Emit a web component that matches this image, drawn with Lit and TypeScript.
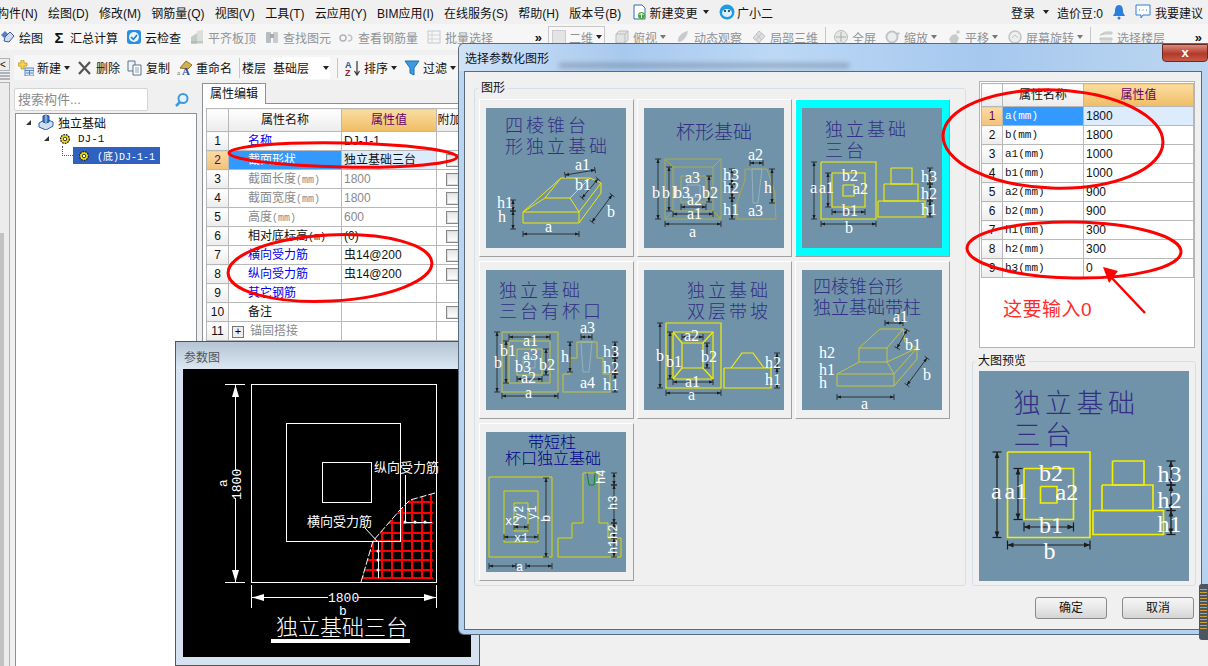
import { LitElement, html, svg, css } from 'lit';
import { customElement } from 'lit/decorators.js';

type Label = [string, number, number, number?];
type Dim = [number, number, number, number];
interface Thumb {
  title: [string, number, number][];
  size?: number;
  spacing?: number;
  titleColor?: string;
  color: string;
  sw: number;
  lines: string[];
  pale?: string[];
  green?: string[];
  dims: Dim[];
  labels: Label[];
  mono?: boolean;
}

const pyramid: Thumb = {
  title: [['四棱锥台', 19, 24], ['形独立基础', 19, 45]],
  spacing: 3,
  color: '#f2e600',
  sw: 1,
  lines: [
    '37,104 93,104 93,115 37,115 37,104 75,70 104,70 84,90 59,90 75,70',
    '59,90 37,104', '84,90 93,104', '104,70 115,75 93,104', '115,75 115,85 93,115',
  ],
  dims: [[37, 126, 93, 126], [106, 114, 126, 87], [79, 67, 109, 62], [96, 90, 112, 71], [27, 92, 27, 103], [27, 103, 27, 121]],
  labels: [['a1', 89, 62], ['b1', 89, 82], ['h1', 11, 100], ['h', 12, 114], ['a', 59, 124], ['b', 121, 109]],
};

const cup: Thumb = {
  title: [['杯形基础', 32, 31]],
  size: 19,
  color: '#a9ab4e',
  sw: 1,
  lines: [
    '21,51 77,51 77,111 21,111 21,51', '29,59 69,59 69,103 29,103 29,59', '37,68 62,68 62,94 37,94 37,68',
    '21,51 29,59', '77,51 69,59', '21,111 29,103', '77,111 69,103',
    '101,61 123,61 131,85 131,95 132,111 93,111 93,94 101,72 101,61',
  ],
  pale: ['43,77 56,77 56,89 43,89 43,77', '108,61 118,61 114,95 109,95 108,61'],
  dims: [[14, 51, 14, 111], [25, 59, 25, 103], [21, 116, 77, 116], [29, 106, 69, 106], [37, 99, 62, 99], [65, 68, 65, 94], [106, 55, 119, 55], [128, 61, 128, 95], [88, 61, 88, 76], [88, 76, 88, 90], [88, 90, 88, 111]],
  labels: [['b', 8, 90], ['b', 18, 90], ['l', 28, 90], ['b3', 30, 90], ['b2', 58, 90], ['a3', 41, 75], ['a2', 43, 97], ['a1', 43, 111], ['a', 45, 129], ['h3', 79, 72], ['h2', 79, 85], ['h1', 79, 107], ['h', 120, 85], ['a3', 104, 108], ['a2', 104, 52]],
};

const threeStep: Thumb = {
  title: [['独立基础', 23, 28], ['三台', 23, 49]],
  spacing: 3,
  color: '#f4ee00',
  sw: 1.1,
  lines: ['19,54 74,54 74,111 19,111 19,54', '30,65 63,65 63,99 30,99 30,65', '41,77 52,77 52,88 41,88 41,77', '76,93 123,93 123,109 76,109 76,93', '82,76 116,76 116,93 82,93 82,76', '89,60 110,60 110,76 89,76 89,60'],
  dims: [[12, 54, 12, 111], [26, 65, 26, 99], [19, 116, 74, 116], [30, 104, 63, 104], [128, 60, 128, 76], [128, 76, 128, 93], [128, 93, 128, 109]],
  labels: [['a', 8, 85], ['a1', 17, 85], ['b2', 40, 73], ['a2', 51, 86], ['b1', 40, 108], ['b', 43, 125], ['h3', 119, 74], ['h2', 119, 91], ['h1', 119, 107]],
};

const threeCup: Thumb = {
  title: [['独立基础', 13, 27], ['三台有杯口', 13, 48]],
  spacing: 3,
  color: '#c4c43e',
  sw: 1,
  lines: ['16,62 72,62 72,122 16,122 16,62', '23,71 64,71 64,113 23,113 23,71', '31,79 56,79 56,105 31,105 31,79', '91,72 111,72 111,88 117,88 117,104 124,104 124,122 77,122 77,104 84,104 84,88 91,88 91,72'],
  pale: ['37,87 49,87 49,98 37,98 37,87', '95,72 106,72 103,102 97,102 95,72'],
  dims: [[11, 62, 11, 122], [20, 71, 20, 113], [16, 126, 72, 126], [23, 67, 64, 67], [31, 109, 56, 109], [60, 79, 60, 105], [95, 67, 106, 67], [84, 72, 84, 102], [129, 72, 129, 88], [129, 88, 129, 104], [129, 104, 129, 122]],
  labels: [['b', 8, 98], ['b1', 14, 86], ['a1', 37, 76], ['a3', 37, 90], ['b3', 29, 102], ['b2', 53, 100], ['a2', 35, 113], ['a', 39, 128], ['a3', 94, 63], ['h', 75, 92], ['a4', 94, 118], ['h3', 117, 87], ['h2', 117, 103], ['h1', 117, 120]],
};

const doubleSlope: Thumb = {
  title: [['独立基础', 43, 27], ['双层带坡', 43, 48]],
  spacing: 3,
  color: '#f4ee00',
  sw: 1.2,
  lines: ['22,53 77,53 77,118 22,118 22,53', '29,62 69,62 69,109 29,109 29,62', '38,73 59,73 59,98 38,98 38,73', '29,62 38,73', '69,62 59,73', '29,109 38,98', '69,109 59,98', '80,98 127,98 127,118 80,118 80,98', '87,98 98,83 109,83 120,98'],
  dims: [[16, 53, 16, 118], [26, 62, 26, 109], [22, 123, 77, 123], [29, 112, 69, 112], [38, 67, 59, 67], [63, 73, 63, 98], [133, 83, 133, 98], [133, 98, 133, 118]],
  labels: [['b', 12, 91], ['b1', 22, 97], ['a2', 40, 71], ['b2', 57, 92], ['a1', 41, 117], ['a', 44, 130], ['h2', 121, 98], ['h1', 121, 115]],
};

const pedestal: Thumb = {
  title: [['四棱锥台形', 11, 23], ['独立基础带柱', 11, 44]],
  color: '#c4c43e',
  sw: 1,
  lines: ['35,104 92,104 92,116 35,116 35,104', '57,78 85,78 85,92 57,92 57,78', '57,78 78,59 101,59 85,78', '101,59 103,72', '92,104 115,78 115,89 92,116', '35,104 57,92', '85,92 92,104', '85,92 115,78', '103,72 115,78'],
  dims: [[35, 127, 92, 127], [105, 115, 125, 88], [83, 53, 101, 53], [105, 60, 95, 78]],
  labels: [['a1', 91, 52], ['b1', 103, 80], ['h2', 17, 88], ['h1', 17, 105], ['h', 17, 118], ['b', 121, 110], ['a', 59, 139]],
};

const shortColumn: Thumb = {
  title: [['带短柱', 42, 16], ['杯口独立基础', 19, 32]],
  size: 16,
  titleColor: '#00008b',
  color: '#d8d800',
  sw: 1,
  mono: true,
  lines: ['3,45 66,45 66,125 3,125 3,45', '18,59 52,59 52,110 18,110 18,59', '28,71 42,71 42,99 28,99 28,71', '97,41 113,41 113,91 122,91 122,106 135,106 135,125 72,125 72,106 86,106 86,91 97,91 97,41'],
  green: ['101,41 103,53 108,53 109,41'],
  dims: [[60, 46, 60, 125], [18, 105, 52, 105], [28, 95, 42, 95], [3, 134, 30, 134], [40, 134, 66, 134], [128, 41, 128, 53], [128, 53, 128, 91], [128, 91, 128, 106], [128, 106, 128, 125]],
  labels: [['x1', 28, 110], ['x2', 19, 93], ['a', 30, 139], ['y2', 37, 88, -90], ['y1', 50, 88, -90], ['b', 64, 90, -90], ['h4', 119, 52, -90], ['h3', 131, 78, -90], ['h2', 131, 107, -90], ['h1', 131, 122, -90]],
};

const THUMBS: Thumb[] = [pyramid, cup, threeStep, threeCup, doubleSlope, pedestal, shortColumn];

function dimension([x1, y1, x2, y2]: Dim) {
  const len = Math.hypot(x2 - x1, y2 - y1) || 1;
  const ux = (x2 - x1) / len;
  const uy = (y2 - y1) / len;
  const head = (x: number, y: number, d: number) =>
    `${x},${y} ${x + d * 4 * ux - 1.6 * uy},${y + d * 4 * uy + 1.6 * ux} ${x + d * 4 * ux + 1.6 * uy},${y + d * 4 * uy - 1.6 * ux}`;
  const tick = (x: number, y: number) =>
    svg`<line x1=${x - 3 * uy} y1=${y + 3 * ux} x2=${x + 3 * uy} y2=${y - 3 * ux}></line>`;
  return svg`
    <line x1=${x1} y1=${y1} x2=${x2} y2=${y2}></line>
    ${tick(x1, y1)}${tick(x2, y2)}
    <polygon class="head" points=${head(x1, y1, 1)}></polygon>
    <polygon class="head" points=${head(x2, y2, -1)}></polygon>`;
}

function drawing(t: Thumb, px: number) {
  return html`<svg class="drawing" width=${px} height=${px} viewBox="0 0 140 140">
    <rect width="140" height="140" fill="#7093a9"></rect>
    ${t.title.map(([s, x, y]) => svg`<text class="t-title" x=${x} y=${y} font-size=${t.size ?? 18} letter-spacing=${t.spacing ?? 0} fill=${t.titleColor ?? '#332f85'}>${s}</text>`)}
    <g fill="none" stroke=${t.color} stroke-width=${t.sw}>
      ${t.lines.map((p) => svg`<polyline points=${p}></polyline>`)}
    </g>
    <g fill="none" stroke="#9fc0c4" stroke-width="0.7">
      ${(t.pale ?? []).map((p) => svg`<polyline points=${p}></polyline>`)}
    </g>
    <g fill="none" stroke="#0a8a1a" stroke-width="1">
      ${(t.green ?? []).map((p) => svg`<polyline points=${p}></polyline>`)}
    </g>
    <g stroke="#1c1c1c" stroke-width="0.8">${t.dims.map(dimension)}</g>
    ${t.labels.map(([s, x, y, r]) => svg`<text class=${t.mono ? 'lab mono' : 'lab'} x=${x} y=${y} transform=${r ? `rotate(${r} ${x} ${y})` : ''}>${s}</text>`)}
  </svg>`;
}

const ic = (body: unknown, w = 16) => html`<svg class="ic" width=${w} height="16" viewBox="0 0 16 16">${body}</svg>`;

const ICONS: Record<string, () => unknown> = {
  pencil: () => ic(svg`<path d="M1 6l4-4 3 3-4 4z" fill="#5a7fc0"/><path d="M5 8l5-5 4 4-5 6-5-1z" fill="#cfdcf0" stroke="#3a5fa0"/>`),
  cloud: () => ic(svg`<rect x="1" y="1" width="14" height="14" rx="3" fill="#2a8fe0"/><circle cx="8" cy="8" r="5" fill="#e8f4ff"/><path d="M5 8l2.4 2.4L11 6" fill="none" stroke="#1d78c8" stroke-width="1.6"/>`),
  align: () => ic(svg`<path d="M2 15V8l6-4v11z" fill="#c4cac4"/><path d="M8 15V2l6-1v14z" fill="#dadfda"/><path d="M2 13h12" stroke="#a8b0a8"/>`),
  find: () => ic(svg`<rect x="2" y="3" width="5" height="11" rx="1" fill="#b8bcc0"/><rect x="9" y="3" width="5" height="11" rx="1" fill="#c8ccd0"/><rect x="6" y="5" width="4" height="4" fill="#a8acb0"/>`),
  rebar: () => ic(svg`<circle cx="4" cy="9" r="3" fill="none" stroke="#b0b4b8" stroke-width="1.5"/><path d="M9 6c5 0 5 6 0 6" fill="none" stroke="#c0c4c8" stroke-width="1.5"/>`),
  batch: () => ic(svg`<rect x="2" y="2" width="12" height="12" fill="none" stroke="#c4c8cc"/><path d="M2 6h12M2 10h12M6 2v12" stroke="#d0d4d8"/>`),
  box: () => ic(svg`<path d="M2 5l3-3h9v9l-3 3H2z" fill="#e2e4e4" stroke="#bcbcbc"/><path d="M2 5h9v9M11 5l3-3" fill="none" stroke="#bcbcbc"/>`),
  orbit: () => ic(svg`<path d="M3 13c-1-5 4-10 10-11-1 6-5 11-10 11z" fill="#c8cacc"/>`),
  local: () => ic(svg`<path d="M8 2l6 5-6 7-6-5z" fill="#dcdede" stroke="#c0c2c2"/><path d="M5 5l6 6M11 4l-6 7" stroke="#c0c2c2"/>`),
  full: () => ic(svg`<circle cx="8" cy="8" r="6.5" fill="#e6e8e8" stroke="#b8bcbc"/><path d="M8 3v10M3 8h10" stroke="#a8acac"/>`),
  zoom: () => ic(svg`<circle cx="7" cy="8" r="5.5" fill="#eceeee" stroke="#c0c4c4" stroke-width="2"/><path d="M13 3v3M12 4.500h3" stroke="#c0c4c4"/>`),
  pan: () => ic(svg`<path d="M3 10l3-4 4-1 3 4-2 5H5z" fill="#c8cbcc"/><path d="M12 1v4M10 3h4" stroke="#c0c4c4"/>`),
  rotate: () => ic(svg`<circle cx="8" cy="8" r="6" fill="#eee" stroke="#c0c4c4" stroke-width="1.500"/><path d="M5 9l3-3 3 3" fill="none" stroke="#c0c4c4"/>`),
  floors: () => ic(svg`<path d="M2 6l5-3h7v2H7zM2 9h12v2H2zM2 13h12" fill="#d4d6d6" stroke="#c4c6c6"/>`),
  add: () => ic(svg`<path d="M3 0h3v3h3v3H6v3H3V6H0V3h3z" fill="#f3d545" stroke="#b09020" stroke-width="0.700"/><rect x="7" y="8" width="9" height="8" fill="#dce8f6" stroke="#5a86c0"/><path d="M7 10.500h9M11.500 11v4M8 13h7" stroke="#5a86c0"/>`),
  del: () => ic(svg`<path d="M2 2l11 12M13 2L2 14" stroke="#555" stroke-width="2.200"/>`),
  copy: () => ic(svg`<path d="M1 1h7v10H1z" fill="#eef3f8" stroke="#5a7390"/><path d="M6 5h8v10H6z" fill="#fff" stroke="#5a7390"/><path d="M8 8h4M8 10h4M8 12h4" stroke="#8aa0b8"/>`),
  rename: () => ic(svg`<path d="M3 8l6-7 6 4-4 4z" fill="#d4b050" stroke="#907020"/><text x="0" y="15" font-size="7" fill="#6a6a6a" font-family="Liberation Serif">a</text><text x="5" y="15" font-size="11" font-weight="bold" fill="#2a4fa0" font-family="Liberation Serif">A</text>`),
  sort: () => ic(svg`<text x="0" y="8" font-size="9" fill="#2a4fa0" font-family="Liberation Sans" font-weight="bold">A</text><text x="0" y="16" font-size="9" fill="#a02020" font-family="Liberation Sans" font-weight="bold">Z</text><path d="M12 1v13M9.500 11l2.500 4 2.500-4" fill="none" stroke="#333" stroke-width="1.200"/>`),
  funnel: () => ic(svg`<path d="M1 1h14L10 8v7l-4-2V8z" fill="#3c9ade" stroke="#1f6fb0"/>`),
  doc: () => ic(svg`<path d="M2 1h8l3 3v11H2z" fill="#fff" stroke="#2a6fb8"/><circle cx="9.500" cy="11.500" r="3.500" fill="#4aa83a"/><path d="M9.500 9v5M7.500 11l2-2 2 2" fill="none" stroke="#fff"/>`),
  smile: () => ic(svg`<ellipse cx="8" cy="8" rx="7.500" ry="7.500" fill="#1e9be6"/><ellipse cx="8" cy="9" rx="5" ry="4" fill="#d8f0ff"/><circle cx="6" cy="7" r="1" fill="#123"/><circle cx="10" cy="7" r="1" fill="#123"/>`),
  bell: () => ic(svg`<path d="M8 1c3 0 4 3 4 6s2 4 2 5H2c0-1 2-2 2-5s1-6 4-6z" fill="#2a80dc"/><circle cx="8" cy="14" r="1.500" fill="#2a80dc"/>`),
  comment: () => ic(svg`<path d="M1 1h14v10H8l-2 3v-3H1z" fill="#fff" stroke="#2a80dc"/><path d="M4 6h1M7.500 6h1M11 6h1" stroke="#2a80dc"/>`),
  tree: () => ic(svg`<path d="M1 9l7-4 7 3v4l-7 4-7-3z" fill="#cfe0f4" stroke="#2a5fa8"/><path d="M5 8V2l3-1 3 1v6l-3 1z" fill="#3f78c0" stroke="#1f4f90"/><path d="M8 1v8" stroke="#cfe0f4"/>`),
  gear: () => ic(svg`<circle cx="8" cy="8" r="5" fill="#f0e020" stroke="#222" stroke-width="1.500" stroke-dasharray="2 1"/><circle cx="8" cy="8" r="2" fill="#fff" stroke="#222"/>`, 14),
  lens: () => ic(svg`<circle cx="9" cy="6.500" r="4.500" fill="#e4f2fc" stroke="#3c9ade" stroke-width="2"/><path d="M6 10l-4 4" stroke="#3c9ade" stroke-width="2.500"/>`),
};

const icon = (name: string) => ICONS[name]();

interface Tool { icon?: string; label?: string; caret?: boolean; sep?: boolean; off?: boolean }

const MENU = ['构件(N)', '绘图(D)', '修改(M)', '钢筋量(Q)', '视图(V)', '工具(T)', '云应用(Y)', 'BIM应用(I)', '在线服务(S)', '帮助(H)', '版本号(B)'];

const TOOLS_LEFT: Tool[] = [
  { icon: 'pencil', label: '绘图' },
  { label: '汇总计算' },
  { icon: 'cloud', label: '云检查' },
  { icon: 'align', label: '平齐板顶', off: true },
  { icon: 'find', label: '查找图元', off: true },
  { icon: 'rebar', label: '查看钢筋量', off: true },
  { icon: 'batch', label: '批量选择', off: true },
];

const TOOLS_RIGHT: Tool[] = [
  { icon: 'box', label: '俯视', caret: true, off: true },
  { icon: 'orbit', label: '动态观察', off: true },
  { icon: 'local', label: '局部三维', off: true },
  { sep: true },
  { icon: 'full', label: '全屏', off: true },
  { icon: 'zoom', label: '缩放', caret: true, off: true },
  { icon: 'pan', label: '平移', caret: true, off: true },
  { icon: 'rotate', label: '屏幕旋转', caret: true, off: true },
  { sep: true },
  { icon: 'floors', label: '选择楼层', off: true },
];

const TOOLS_PANEL: Tool[] = [
  { icon: 'add', label: '新建', caret: true },
  { icon: 'del', label: '删除' },
  { icon: 'copy', label: '复制' },
  { icon: 'rename', label: '重命名' },
];

interface PropRow { name: string; unit?: string; value?: string; kind: 'link' | 'off' | 'plain'; check: boolean; selected?: boolean; expand?: boolean }

const PROPS: PropRow[] = [
  { name: '名称', value: 'DJ-1-1', kind: 'link', check: false },
  { name: '截面形状', value: '独立基础三台', kind: 'plain', check: true, selected: true },
  { name: '截面长度', unit: '(mm)', value: '1800', kind: 'off', check: true },
  { name: '截面宽度', unit: '(mm)', value: '1800', kind: 'off', check: true },
  { name: '高度', unit: '(mm)', value: '600', kind: 'off', check: true },
  { name: '相对底标高', unit: '(m)', value: '(0)', kind: 'plain', check: true },
  { name: '横向受力筋', value: '虫14@200', kind: 'link', check: true },
  { name: '纵向受力筋', value: '虫14@200', kind: 'link', check: true },
  { name: '其它钢筋', kind: 'link', check: false },
  { name: '备注', kind: 'plain', check: true },
  { name: '锚固搭接', kind: 'off', check: false, expand: true },
];

const PARAMS: [string, string][] = [
  ['a', '1800'], ['b', '1800'], ['a1', '1000'], ['b1', '1000'], ['a2', '900'],
  ['b2', '900'], ['h1', '300'], ['h2', '300'], ['h3', '0'],
];

@customElement('app-root')
export class AppRoot extends LitElement {
  static styles = css`
    :host {
      display: block;
      position: relative;
      width: 1208px;
      height: 666px;
      overflow: hidden;
      background: #f0f0f0;
      color: #111;
      font: 12px 'Liberation Sans', 'Noto Sans CJK SC', sans-serif;
    }
    svg { display: block; flex: none; }

    .menu { display: flex; align-items: center; gap: 10.3px; height: 24px; margin-left: -3px; white-space: nowrap; }
    .menu .extra { display: flex; align-items: center; gap: 2px; }
    .menu .extra .caret { margin-left: 3px; }
    .menu .end { margin-left: auto; display: flex; align-items: center; gap: 8px; padding-right: 5px; }
    .menu .suggest { display: flex; align-items: center; gap: 4px; }
    .caret { width: 0; height: 0; border: 3px solid transparent; border-top: 4px solid #222; border-bottom: 0; flex: none; }
    .off .caret { border-top-color: #777; }

    .bar { display: flex; align-items: center; height: 26px; white-space: nowrap; background: #f6f6f6; }
    .bar .group { display: flex; align-items: center; gap: 8px; width: 548px; flex: none; }
    .bar .group2 { display: flex; align-items: center; gap: 9px; flex: none; }
    .bar .group2 .sep { margin: 0 -2px; }
    .more { margin-left: auto; font-size: 13px; font-weight: bold; padding-right: 6px; }
    .tool { display: inline-flex; align-items: center; gap: 3px; font-size: 12px; }
    .tool.off { color: #8f9396; }
    .sigma { font-size: 15px; font-weight: bold; width: 16px; text-align: center; }
    .sep { width: 1px; height: 20px; background: #c4c8cc; flex: none; }
    .view-box { display: inline-flex; align-items: center; gap: 3px; width: 52px; padding-left: 3px; color: #8f9396; font-size: 12px; border: 1px solid #c8c8c8; height: 20px; background: #f8f8f8; }
    .view-box i { width: 12px; height: 12px; background: #e4e4e4; border: 1px solid #ccc; }
    .gap-5 { height: 5px; }

    .work { display: flex; height: 611px; }
    .strip { width: 10px; margin: 3px 4px 0 0; display: flex; flex-direction: column; gap: 1px; flex: none; }
    .strip div { border: 1px solid #b0b4b8; border-left: 0; background: #ececec; }
    .strip .s1 { height: 12px; font-size: 10px; line-height: 11px; }
    .strip .s2 { height: 20px; }
    .strip .s3 { height: 21px; background: #f8f8f8; }
    .strip .s4 { flex: 1; display: flex; flex-direction: column; margin-top: 1px; }
    .strip .s4 b { width: 4px; height: 458px; margin-top: 150px; background: #c2c2c2; display: block; }
    .strip .s5 { height: 31px; margin-bottom: 32px; }

    .center { flex: 1; min-width: 0; display: flex; flex-direction: column; }
    .bar3 { display: flex; align-items: center; height: 25px; gap: 7px; padding-left: 4px; background: #f6f6f6; white-space: nowrap; width: 444px; }
    .bar3 .tight { margin-right: -5px; }
    .bar3 .floor-sel { display: inline-flex; align-items: center; width: 57px; height: 22px; background: #fff; font-size: 12px; }
    .bar3 .floor-sel .caret { margin-left: auto; margin-right: 1px; }
    .panels { display: flex; flex: 1; min-height: 0; gap: 5px; margin-top: 3px; }

    .tree-col { width: 183px; flex: none; display: flex; flex-direction: column; gap: 2px; padding-top: 5px; }
    .search { display: flex; align-items: center; gap: 28px; height: 23px; color: #8a8a8a; font-size: 13px; }
    .search span { width: 134px; height: 23px; line-height: 21px; padding-left: 3px; background: #fff; border: 1px solid #d4d4d4; border-radius: 2px; box-sizing: border-box; flex: none; }
    .search svg { margin-left: -2px; }
    .tree { flex: 1; margin-left: 1px; background: #fff; border: 1px solid #8a9298; border-bottom: 0; }
    .node { display: flex; align-items: center; height: 17px; gap: 4px; white-space: nowrap; }
    .node .tri { width: 0; height: 0; border-left: 5px solid transparent; border-bottom: 5px solid #333; margin-right: 3px; }
    .node.root { height: 16px; padding-left: 10px; font-size: 12px; }
    .node.mid { padding-left: 28px; gap: 6px; font-family: 'Liberation Mono', 'Noto Sans CJK SC', monospace; font-size: 11px; }
    .node.sel { padding-left: 58px; font-family: 'Liberation Mono', 'Noto Sans CJK SC', monospace; font-size: 10px; }
    .node.sel .pick { display: flex; align-items: center; gap: 6px; height: 17px; width: 87px; padding-left: 4px; box-sizing: border-box; background: #2f62c0; color: #fff; }
    .node .dots { width: 10px; height: 9px; border-left: 1px dotted #555; border-bottom: 1px dotted #555; margin: -9px -4px 0 -12px; }

    .prop-col { flex: 1; min-width: 0; }
    .tabs { display: flex; height: 20px; border-bottom: 1px solid #8a9298; width: 260px; }
    .tabs span { width: 64px; height: 21px; text-align: center; line-height: 20px; background: #fff; border: 1px solid #8a9298; border-bottom: 0; box-sizing: border-box; font-size: 12px; }
    .prop-body { background: #fff; height: 233px; padding: 4px 0 0 3px; width: 252px; border-left: 1px solid #8a9298; }

    table { border-collapse: collapse; table-layout: fixed; background: #fff; }
    th, td { height: 19px; line-height: 16px; border: 1px solid #b8b8b8; padding: 0; white-space: nowrap; overflow: hidden; box-sizing: border-box; font-weight: normal; }
    th { height: 23px; text-align: center; background: linear-gradient(#fff, #ebebeb); font-size: 12px; }
    th.val { background: linear-gradient(#fbdda2, #efbd63); color: #66006a; }
    td.num { text-align: center; background: linear-gradient(#fff, #ececec); font-size: 12px; }
    tr.sel td.num { background: linear-gradient(#fbdba0, #f2c27a); color: #66006a; }
    tr.sel td.nm { background: #3399ff; color: #fff; }
    tr.sel td.vl { background: #dcecfd; }
    td.nm { padding-left: 19px; font-size: 12px; }
    td.vl { padding-left: 2px; font-size: 12px; }
    td.chk { padding-left: 9px; }
    .checkbox { display: block; width: 11px; height: 11px; border: 1px solid #888; background: linear-gradient(#e4e4e4, #fff); box-shadow: inset 0 0 0 1px #ddd; }
    .link { color: #0000ee; }
    .dim { color: #8a8a8a; }
    .unit { font: 10px 'Liberation Mono', monospace; }
    .plus { display: inline-block; width: 10px; height: 10px; line-height: 9px; text-align: center; border: 1px solid #777; background: #eee; margin: 0 6px 0 -16px; font-size: 11px; color: #000; vertical-align: 0; }

    /* floating windows */
    .param { position: absolute; left: 175px; top: 341px; width: 305px; height: 325px; box-sizing: border-box; background: #d6e2f0; border: 1px solid #555; padding: 0 8px 8px 7px; }
    .param-title { height: 27px; line-height: 33px; color: #555; font-size: 12px; background: linear-gradient(#b4c4d4, #dbe7f3); margin: 0 -8px 0 -7px; padding-left: 8px; }
    .param-draw { background: #000; }
    .param-draw text { fill: #fff; font-family: 'Noto Sans CJK SC', sans-serif; font-size: 13px; }
    .param-draw .en { font-family: 'Liberation Mono', monospace; font-size: 13px; }
    .param-draw .big { font-size: 22px; letter-spacing: 0; font-weight: 300; }

    .dialog { position: absolute; left: 458px; top: 43px; width: 750px; height: 592px; box-sizing: border-box; border: 1px solid #5a6a78; border-right: 0; border-radius: 6px 0 0 6px; background: linear-gradient(180deg, #bcd6f2, #b4d2ee); padding-left: 5px; display: flex; flex-direction: column; overflow: hidden; }
    .dialog-title { height: 27px; flex: none; display: flex; align-items: center; margin-left: -5px; padding-left: 6px; position: relative; font-size: 12px; color: #111; background: linear-gradient(90deg, #cfe2f7, #a8c9ee 22%, #bcd8f6 42%, #a6c8ee 70%, #bcd6f0 100%); }
    .dialog-title .smear { position: absolute; left: 100px; top: 19px; width: 290px; height: 5px; background: #54606c; opacity: 0.4; filter: blur(2.5px); }
    .dialog-title .close { position: absolute; right: 0; top: 0; width: 46px; height: 18px; border-radius: 0 0 4px 4px; background: linear-gradient(#d98b7c, #b23a28 55%, #c85a48); border: 1px solid #6a2a20; box-sizing: border-box; color: #fff; text-align: center; font: bold 13px/15px 'Liberation Sans', sans-serif; }
    .dialog-body { flex: 1; margin-bottom: 4px; margin-right: 6px; background: #f0f0f0; border: 1px solid #5a6a78; display: flex; padding: 9px 0 0 9px; box-sizing: border-box; min-height: 0; }

    fieldset { margin: 0; padding: 0; border: 1px solid #d6dfe8; border-radius: 3px; min-width: 0; }
    legend { padding: 0 3px; margin-left: -1px; font-size: 12px; height: 14px; line-height: 14px; }
    .shapes { width: 492px; height: 505px; box-sizing: border-box; padding: 4px 0 0 4px; flex: none; }
    .grid { display: grid; grid-template-columns: repeat(3, 155px); grid-auto-rows: 158px; gap: 4px 3px; }
    .cell { box-sizing: border-box; background: #f0f0f0; border: 1px solid; border-color: #fff #a0a0a0 #a0a0a0 #fff; display: flex; align-items: flex-start; padding: 8px 0 0 6px; }
    .cell.on { background: #00ffff; }
    .drawing .t-title { font-family: 'Noto Sans CJK SC', sans-serif; font-weight: 300; }
    .drawing .lab { fill: #fff; font-family: 'Liberation Serif', serif; font-size: 16px; stroke: none; }
    .drawing .lab.mono { font-family: 'Liberation Mono', monospace; font-size: 12px; }
    .drawing .head { fill: #1c1c1c; stroke: none; }

    .side { flex: 1; min-width: 0; display: flex; flex-direction: column; margin-left: 6px; }
    .param-box { width: 216px; height: 267px; margin-left: 7px; box-sizing: border-box; background: #fff; border: 1px solid #b4b4b4; padding: 1px; flex: none; }
    .param-box td.num { font-size: 12px; }
    .param-box td.nm { padding-left: 2px; font: 11px/16px 'Liberation Mono', monospace; }
    .param-box td.vl { padding-left: 2px; font-size: 12px; }
    .hint { color: #ff2a2a; font-size: 19px; letter-spacing: 0.5px; margin: 21px 0 0 22px; line-height: 22px; }
    .preview { width: 224px; height: 232px; margin-top: 6px; box-sizing: border-box; padding: 3px 0 0 6px; flex: none; }
    .preview legend { margin-left: -4px; }
    .actions { display: flex; justify-content: flex-end; gap: 15px; width: 222px; margin-top: 11px; }
    .btn { width: 72px; height: 22px; box-sizing: border-box; border: 1px solid #8a8a8a; border-radius: 3px; background: linear-gradient(#f6f6f6, #e8e8e8 50%, #d4d4d4); text-align: center; line-height: 20px; font-size: 12px; }

    .ink { position: absolute; inset: 0; pointer-events: none; }
    .meter { position: absolute; right: 0; top: 584px; width: 9px; height: 56px; background: #4c5660; border-radius: 3px 0 0 3px; box-sizing: border-box; padding: 5px 1px 0 1px; }
    .meter div { height: 42px; background: repeating-linear-gradient(#d0a040 0 1px, #4c5660 1px 3px); }
  `;

  private tool(t: Tool) {
    if (t.sep) return html`<span class="sep"></span>`;
    return html`<span class="tool ${t.off ? 'off' : ''}">
      ${t.icon ? icon(t.icon) : html`<span class="sigma">Σ</span>`}
      <span>${t.label}</span>
      ${t.caret ? html`<span class="caret"></span>` : ''}
    </span>`;
  }

  private renderParamWindow() {
    const xs = [180, 190, 199, 209, 219, 229, 239, 248];
    const ys = [133, 144, 154, 164, 172, 182, 191, 201, 209];
    return html`<div class="param">
      <div class="param-title">参数图</div>
      <svg class="param-draw" width="288" height="288" viewBox="0 0 288 288">
        <defs>
          <clipPath id="cut"><path d="M178 213L190 172 217 141 227 131 252 124V213Z"></path></clipPath>
        </defs>
        <g clip-path="url(#cut)" stroke="#f00" stroke-width="2">
          ${xs.map((x) => svg`<line x1=${x} y1="120" x2=${x} y2="210"></line>`)}
          ${ys.map((y) => svg`<line x1="170" y1=${y} x2="250" y2=${y}></line>`)}
        </g>
        <g fill="none" stroke="#fff" stroke-width="1">
          <rect x="68.500" y="15.500" width="185" height="198"></rect>
          <rect x="103.500" y="54.500" width="114" height="118"></rect>
          <rect x="139.500" y="93.500" width="49" height="40"></rect>
          <path d="M42 15.500H62M42 213.500H62M52.500 15V101M52.500 129V213"></path>
          <path d="M68.500 216V239M253.500 216V239M68 228.500H145M175 228.500H253"></path>
          <path d="M222.500 106V153.500H249M182 159L195 173M195.500 173V209"></path>
          <path d="M178 213L190 172 217 141 227 131 252 124" stroke-dasharray="7 2"></path>
        </g>
        <g fill="#fff">
          <path d="M52.500 16L49 28H56ZM52.500 213L49 201H56ZM69 228.500L81 225V232ZM253 228.500L241 225V232Z"></path>
          <circle cx="195" cy="182" r="1.500"></circle><circle cx="195" cy="191" r="1.500"></circle><circle cx="195" cy="201" r="1.500"></circle>
          <circle cx="222" cy="153" r="1.500"></circle><circle cx="232" cy="153" r="1.500"></circle><circle cx="242" cy="153" r="1.500"></circle>
          <rect x="88" y="270" width="139" height="4"></rect>
        </g>
        <text class="en" x="0" y="0" transform="translate(58 131) rotate(-90)">1800</text>
        <text class="en" x="0" y="0" transform="translate(44 118) rotate(-90)">a</text>
        <text class="en" x="145" y="233">1800</text>
        <text class="en" x="156" y="246">b</text>
        <text x="191" y="103">纵向受力筋</text>
        <text x="124" y="157">横向受力筋</text>
        <text class="big" x="93" y="266">独立基础三台</text>
      </svg>
    </div>`;
  }

  private renderDialog() {
    return html`<div class="dialog">
      <div class="dialog-title">
        选择参数化图形
        <span class="smear"></span>
        <span class="close">x</span>
      </div>
      <div class="dialog-body">
        <fieldset class="shapes">
          <legend>图形</legend>
          <div class="grid">
            ${THUMBS.map((t) => html`<div class="cell ${t === threeStep ? 'on' : ''}">${drawing(t, 140)}</div>`)}
          </div>
        </fieldset>
        <div class="side">
          <div class="param-box">
            <table style="width:212px">
              <colgroup><col style="width:21px" /><col style="width:81px" /><col style="width:110px" /></colgroup>
              <tr><th></th><th>属性名称</th><th class="val">属性值</th></tr>
              ${PARAMS.map(([n, v], i) => html`<tr class=${i === 0 ? 'sel' : ''}>
                <td class="num">${i + 1}</td>
                <td class="nm">${n}(mm)</td>
                <td class="vl">${v}</td>
              </tr>`)}
            </table>
            <div class="hint">这要输入0</div>
          </div>
          <fieldset class="preview">
            <legend>大图预览</legend>
            ${drawing(threeStep, 210)}
          </fieldset>
          <div class="actions">
            <span class="btn">确定</span>
            <span class="btn">取消</span>
          </div>
        </div>
      </div>
    </div>`;
  }

  render() {
    return html`
      <div class="menu">
        ${MENU.map((m) => html`<span>${m}</span>`)}
        <span class="extra">${icon('doc')}<span>新建变更</span><span class="caret"></span></span>
        <span class="extra">${icon('smile')}<span>广小二</span></span>
        <span class="end">
          <span>登录</span><span class="caret"></span>
          <span>造价豆:0</span>
          ${icon('bell')}
          <span class="suggest">${icon('comment')}<span>我要建议</span></span>
        </span>
      </div>
      <div class="bar">
        <div class="group">
          ${TOOLS_LEFT.map((t) => this.tool(t))}
          <span class="more">»</span>
        </div>
        <div class="group2">
          <span class="view-box"><i></i>二维<span class="caret"></span></span>
          ${TOOLS_RIGHT.map((t) => this.tool(t))}
        </div>
        <span class="more">»</span>
      </div>
      <div class="gap-5"></div>
      <div class="work">
        <div class="strip">
          <div class="s1">&lt;</div>
          <div class="s2"></div>
          <div class="s2"></div>
          <div class="s3"></div>
          <div class="s4"><b></b></div>
          <div class="s5"></div>
        </div>
        <div class="center">
          <div class="bar3">
            ${TOOLS_PANEL.map((t) => this.tool(t))}
            <span class="sep tight"></span>
            <span class="tool">楼层</span>
            <span class="floor-sel">基础层<span class="caret"></span></span>
            <span class="sep"></span>
            ${this.tool({ icon: 'sort', label: '排序', caret: true })}
            ${this.tool({ icon: 'funnel', label: '过滤', caret: true })}
          </div>
          <div class="panels">
            <div class="tree-col">
              <div class="search"><span>搜索构件...</span>${icon('lens')}</div>
              <div class="tree">
                <div class="node root"><span class="tri"></span>${icon('tree')}<span>独立基础</span></div>
                <div class="node mid"><span class="tri"></span>${icon('gear')}<span>DJ-1</span></div>
                <div class="node sel"><span class="dots"></span><span class="pick">${icon('gear')}<span>(底)DJ-1-1</span></span></div>
              </div>
            </div>
            <div class="prop-col">
              <div class="tabs"><span>属性编辑</span></div>
              <div class="prop-body">
                <table style="width:256px">
                  <colgroup><col style="width:22px" /><col style="width:113px" /><col style="width:95px" /><col style="width:26px" /></colgroup>
                  <tr><th></th><th>属性名称</th><th class="val">属性值</th><th>附加</th></tr>
                  ${PROPS.map((r, i) => html`<tr class=${r.selected ? 'sel' : ''}>
                    <td class="num">${i + 1}</td>
                    <td class="nm ${r.kind === 'link' ? 'link' : r.kind === 'off' ? 'dim' : ''}">
                      ${r.expand ? html`<span class="plus">+</span>` : ''}${r.name}${r.unit ? html`<span class="unit">${r.unit}</span>` : ''}
                    </td>
                    <td class="vl ${r.kind === 'off' ? 'dim' : ''}">${r.value ?? ''}</td>
                    <td class="chk">${r.check ? html`<span class="checkbox"></span>` : ''}</td>
                  </tr>`)}
                </table>
              </div>
            </div>
          </div>
        </div>
      </div>
      ${this.renderParamWindow()}
      ${this.renderDialog()}
      <svg class="ink" width="1208" height="666" viewBox="0 0 1208 666" fill="none" stroke="#f00" stroke-width="3">
        <ellipse cx="343" cy="155" rx="114" ry="12" transform="rotate(1 343 155)"></ellipse>
        <ellipse cx="330" cy="268" rx="102" ry="33" transform="rotate(-3 330 268)"></ellipse>
        <ellipse cx="1053" cy="139" rx="110" ry="49" transform="rotate(2 1053 139)"></ellipse>
        <ellipse cx="1074" cy="250" rx="107" ry="28" transform="rotate(1 1074 250)"></ellipse>
        <path d="M1145 313L1110 276" stroke-width="2.500"></path>
        <path d="M1103 267L1118 271 1109 283Z" fill="#f00" stroke="none"></path>
      </svg>
      <div class="meter"><div></div></div>
    `;
  }
}
